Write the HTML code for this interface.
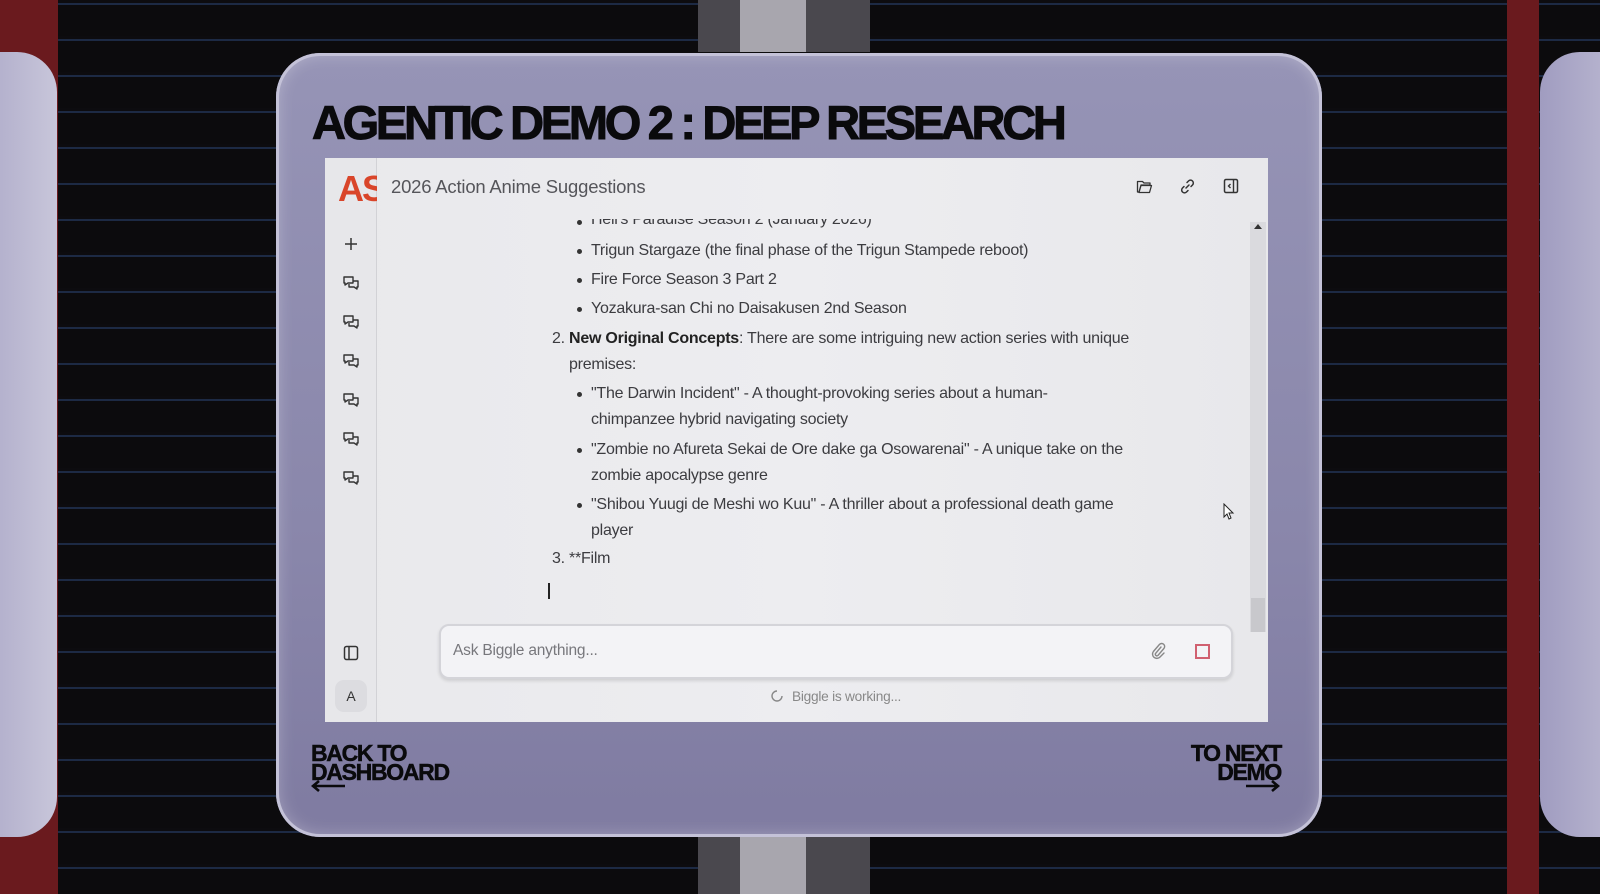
<!DOCTYPE html>
<html><head><meta charset="utf-8"><style>
*{margin:0;padding:0;box-sizing:border-box}
body{width:1600px;height:894px;overflow:hidden;position:relative;font-family:"Liberation Sans",sans-serif;
background:#0b0a0c;}
.stripes{position:absolute;inset:0;background:repeating-linear-gradient(180deg,#0d0c0f 0px,#0d0c0f 3px,#1d2a44 3px,#1d2a44 5px,#0c0b0d 5px,#0c0b0d 36px);}
.red{position:absolute;top:0;height:894px;background:#6a1a1e}
.pillar{position:absolute;left:698px;width:172px;background:#4a484e}
.pillar i{position:absolute;left:42px;width:66px;top:0;bottom:0;background:#a8a6ae}
.side{position:absolute;background:linear-gradient(90deg,#a09cc0,#c8c6da);border-radius:40px}
.card{position:absolute;left:276px;top:53px;width:1046px;height:784px;border-radius:44px;
background:linear-gradient(180deg,#9694b6 0%,#8a87ab 60%,#7f7ba1 100%);box-shadow:inset 0 0 0 3px #c4c2d8,inset 0 0 18px rgba(255,255,255,.35)}
.title{position:absolute;left:312px;top:95px;font-family:"Liberation Sans",sans-serif;font-weight:900;font-size:47px;letter-spacing:-3.3px;color:#0a0a0c;white-space:nowrap;-webkit-text-stroke:1px #0a0a0c}
.app{position:absolute;left:325px;top:158px;width:943px;height:564px;background:linear-gradient(90deg,#e9e9ec,#ededf0 50%,#e8e8eb);}
.sb{position:absolute;left:0;top:0;width:52px;height:564px;background:#e7e7ea;border-right:1px solid #d2d2d6}
.logo{position:absolute;left:13px;top:10px;font-weight:900;font-size:36px;color:#d9452a;letter-spacing:-2px;width:39px;overflow:hidden;white-space:nowrap}
.hdr{position:absolute;left:66px;top:18px;font-size:18.5px;color:#55555a;letter-spacing:-.2px}
.txt{position:absolute;color:#3c3c40;font-size:16px;letter-spacing:-.25px;white-space:nowrap}
.bul{position:absolute;width:5px;height:5px;border-radius:50%;background:#333}
.ic{position:absolute}
.input{position:absolute;left:114px;top:466px;width:794px;height:55px;border-radius:10px;background:#f3f3f6;border:2px solid #d4d4d9;box-shadow:0 2px 3px rgba(0,0,0,.12)}
.nav{position:absolute;font-weight:900;font-size:23px;line-height:19px;letter-spacing:-1.3px;color:#0a0a0c;-webkit-text-stroke:.5px #0a0a0c}
</style></head><body>
<div class="stripes"></div>
<div class="red" style="left:0;width:58px"></div>
<div class="red" style="left:1507px;width:32px"></div>
<div class="pillar" style="top:0;height:52px"><i></i></div>
<div class="pillar" style="top:837px;height:57px"><i></i></div>
<div class="side" style="left:-60px;top:52px;width:117px;height:785px"></div>
<div class="side" style="left:1540px;top:52px;width:120px;height:785px"></div>
<div class="card"></div>
<div class="title">AGENTIC DEMO 2 : DEEP RESEARCH</div>

<div class="app">
 <div class="sb">
  <div class="logo">AS</div>
  <svg class="ic" style="left:18px;top:78px" width="16" height="16" viewBox="0 0 16 16"><path d="M8 2v12M2 8h12" stroke="#333" stroke-width="1.5"/></svg>
  <svg class="ic" style="left:17px;top:117px" width="18" height="17" viewBox="0 0 18 17"><path d="M2 2h9v6H6l-3 2V8H2zM11 6h5v6h-1v2l-3-2H7V9" fill="none" stroke="#333" stroke-width="1.4" stroke-linejoin="round"/></svg>
  <svg class="ic" style="left:17px;top:156px" width="18" height="17" viewBox="0 0 18 17"><path d="M2 2h9v6H6l-3 2V8H2zM11 6h5v6h-1v2l-3-2H7V9" fill="none" stroke="#333" stroke-width="1.4" stroke-linejoin="round"/></svg>
  <svg class="ic" style="left:17px;top:195px" width="18" height="17" viewBox="0 0 18 17"><path d="M2 2h9v6H6l-3 2V8H2zM11 6h5v6h-1v2l-3-2H7V9" fill="none" stroke="#333" stroke-width="1.4" stroke-linejoin="round"/></svg>
  <svg class="ic" style="left:17px;top:234px" width="18" height="17" viewBox="0 0 18 17"><path d="M2 2h9v6H6l-3 2V8H2zM11 6h5v6h-1v2l-3-2H7V9" fill="none" stroke="#333" stroke-width="1.4" stroke-linejoin="round"/></svg>
  <svg class="ic" style="left:17px;top:273px" width="18" height="17" viewBox="0 0 18 17"><path d="M2 2h9v6H6l-3 2V8H2zM11 6h5v6h-1v2l-3-2H7V9" fill="none" stroke="#333" stroke-width="1.4" stroke-linejoin="round"/></svg>
  <svg class="ic" style="left:17px;top:312px" width="18" height="17" viewBox="0 0 18 17"><path d="M2 2h9v6H6l-3 2V8H2zM11 6h5v6h-1v2l-3-2H7V9" fill="none" stroke="#333" stroke-width="1.4" stroke-linejoin="round"/></svg>
  <svg class="ic" style="left:18px;top:487px" width="16" height="16" viewBox="0 0 16 16"><rect x="1.5" y="1.5" width="13" height="13" rx="2" fill="none" stroke="#333" stroke-width="1.5"/><path d="M6 2v12" stroke="#333" stroke-width="1.5"/></svg>
  <div style="position:absolute;left:10px;top:522px;width:32px;height:32px;border-radius:9px;background:#dcdce0;font-size:14px;color:#333;text-align:center;line-height:32px">A</div>
 </div>
 <div class="hdr">2026 Action Anime Suggestions</div>
 <svg class="ic" style="left:811px;top:21px" width="17" height="15" viewBox="0 0 17 15"><path d="M1.5 2.5h5l1.5 1.5h6v2H5l-2 7h-1.5zM3 13.5l2-7h10.5l-2 7z" fill="none" stroke="#333" stroke-width="1.3" stroke-linejoin="round"/></svg>
 <svg class="ic" style="left:854px;top:20px" width="17" height="17" viewBox="0 0 17 17"><path d="M7 10l3-3M8 4.5l1.5-1.5a2.8 2.8 0 014 4L12 8.5M9 12.5L7.5 14a2.8 2.8 0 01-4-4L5 8.5" fill="none" stroke="#333" stroke-width="1.5" stroke-linecap="round"/></svg>
 <svg class="ic" style="left:898px;top:20px" width="16" height="16" viewBox="0 0 16 16"><rect x="1.5" y="1.5" width="13" height="13" rx="1.5" fill="none" stroke="#333" stroke-width="1.5"/><path d="M10.5 2v12M7.5 6l-2 2 2 2" fill="none" stroke="#333" stroke-width="1.4"/></svg>
 <div style="position:absolute;left:925px;top:64px;width:16px;height:410px;background:#dadade"></div>
 <div style="position:absolute;left:929px;top:66px;width:0;height:0;border-left:4px solid transparent;border-right:4px solid transparent;border-bottom:5px solid #333"></div>
 <div style="position:absolute;left:926px;top:440px;width:14px;height:34px;background:#c8c8cc"></div>

 <div style="position:absolute;left:0;top:61px;width:920px;height:10px;overflow:hidden"><div class="txt" style="left:266px;top:-8px">Hell's Paradise Season 2 (January 2026)</div><div class="bul" style="left:252px;top:1px"></div></div>
 <div class="bul" style="left:252px;top:91px"></div><div class="txt" style="left:266px;top:84px">Trigun Stargaze (the final phase of the Trigun Stampede reboot)</div>
 <div class="bul" style="left:252px;top:120px"></div><div class="txt" style="left:266px;top:113px">Fire Force Season 3 Part 2</div>
 <div class="bul" style="left:252px;top:149px"></div><div class="txt" style="left:266px;top:142px">Yozakura-san Chi no Daisakusen 2nd Season</div>
 <div class="txt" style="left:227px;top:172px">2. <b style="color:#222">New Original Concepts</b>: There are some intriguing new action series with unique</div>
 <div class="txt" style="left:244px;top:198px">premises:</div>
 <div class="bul" style="left:252px;top:234px"></div><div class="txt" style="left:266px;top:227px">"The Darwin Incident" - A thought-provoking series about a human-</div>
 <div class="txt" style="left:266px;top:253px">chimpanzee hybrid navigating society</div>
 <div class="bul" style="left:252px;top:290px"></div><div class="txt" style="left:266px;top:283px">"Zombie no Afureta Sekai de Ore dake ga Osowarenai" - A unique take on the</div>
 <div class="txt" style="left:266px;top:309px">zombie apocalypse genre</div>
 <div class="bul" style="left:252px;top:345px"></div><div class="txt" style="left:266px;top:338px">"Shibou Yuugi de Meshi wo Kuu" - A thriller about a professional death game</div>
 <div class="txt" style="left:266px;top:364px">player</div>
 <div class="txt" style="left:227px;top:392px">3. **Film</div>
 <div style="position:absolute;left:223px;top:425px;width:1.5px;height:16px;background:#222"></div>
 <svg class="ic" style="left:898px;top:345px" width="12" height="18" viewBox="0 0 12 18"><path d="M1 1v13l3-3 2 5 2-1-2-5h4z" fill="#fff" stroke="#222" stroke-width="1"/></svg>

 <div class="input">
  <div style="position:absolute;left:12px;top:16px;font-size:15.5px;color:#77777c;letter-spacing:-.2px">Ask Biggle anything...</div>
  <svg class="ic" style="left:709px;top:16px" width="16" height="18" viewBox="0 0 16 18"><path d="M11 5l-5.5 6.5a1.6 1.6 0 002.4 2l6-7a3 3 0 00-4.5-4l-6 7a4.3 4.3 0 006.5 5.6L14 11" fill="none" stroke="#888" stroke-width="1.4" stroke-linecap="round"/></svg>
  <div style="position:absolute;left:754px;top:18px;width:15px;height:15px;border:2px solid #d06070"></div>
 </div>
 <svg class="ic" style="left:446px;top:532px" width="12" height="12" viewBox="0 0 12 12"><path d="M6 1a5 5 0 105 5" fill="none" stroke="#888" stroke-width="1.4"/></svg>
 <div class="txt" style="left:467px;top:531px;font-size:13.7px;color:#888">Biggle is working...</div>
</div>

<div class="nav" style="left:311px;top:744px">BACK TO<br>DASHBOARD</div>
<svg class="ic" style="left:311px;top:780px" width="36" height="12" viewBox="0 0 36 12"><path d="M34 6H3M8 1L2 6l6 5" fill="none" stroke="#0a0a0c" stroke-width="2.6"/></svg>
<div class="nav" style="left:1160px;top:744px;width:121px;text-align:right">TO NEXT<br>DEMO</div>
<svg class="ic" style="left:1244px;top:780px" width="36" height="12" viewBox="0 0 36 12"><path d="M2 6h31M28 1l6 5-6 5" fill="none" stroke="#0a0a0c" stroke-width="2.6"/></svg>
</body></html>
